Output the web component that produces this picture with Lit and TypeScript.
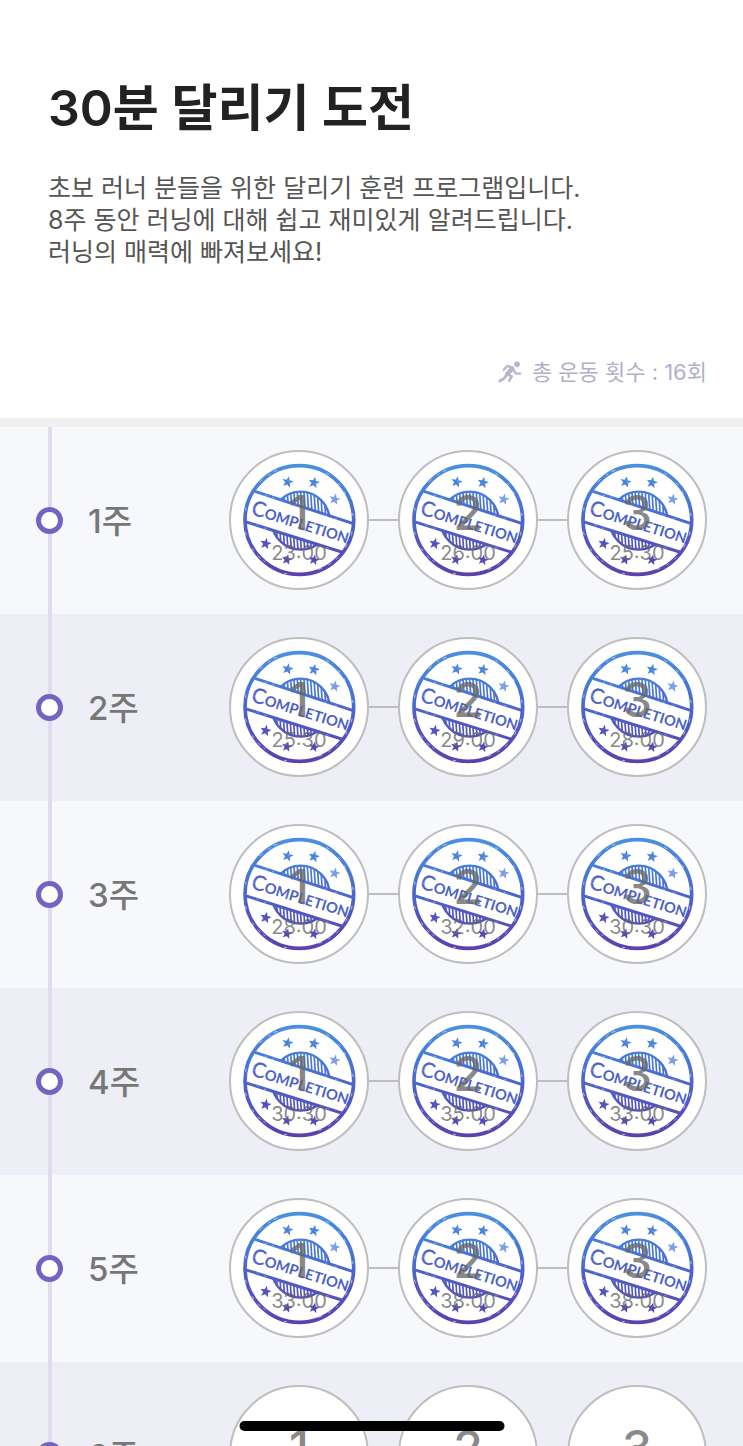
import { LitElement, html, css, svg, nothing } from "lit";
import { customElement, property } from "lit/decorators.js";

interface Week {
  week: number;
  done: boolean;
  times: string[];
}

const WEEKS: Week[] = [
  { week: 1, done: true, times: ["23:00", "26:00", "25:30"] },
  { week: 2, done: true, times: ["25:30", "29:00", "28:00"] },
  { week: 3, done: true, times: ["28:00", "32:00", "30:30"] },
  { week: 4, done: true, times: ["30:30", "35:00", "33:00"] },
  { week: 5, done: true, times: ["33:00", "38:00", "38:00"] },
  { week: 6, done: false, times: ["", "", ""] },
];

/** Five-pointed star around (cx, cy). */
const star = (cx: number, cy: number, r: number, turn: number) => {
  const points = Array.from({ length: 10 }, (_, i) => {
    const radius = i % 2 ? r * 0.42 : r;
    const a = ((i * 36 - 90 + turn) * Math.PI) / 180;
    return `${(cx + radius * Math.cos(a)).toFixed(1)},${(cy + radius * Math.sin(a)).toFixed(1)}`;
  }).join(" ");
  return svg`<polygon points=${points}></polygon>`;
};

@customElement("completion-stamp")
export class CompletionStamp extends LitElement {
  static styles = css`
    :host {
      display: block;
    }
    .art {
      display: block;
      width: 100%;
      height: 100%;
    }
    .word {
      font-family: Lato, "Open Sans", sans-serif;
      font-weight: 700;
      font-size: 44px;
      fill: #4c62c8;
    }
    .initial {
      font-size: 62px;
      font-weight: 400;
      stroke: #4c62c8;
      stroke-width: 1px;
    }
  `;

  render() {
    const hatch = Array.from({ length: 19 }, (_, i) => 142 + i * 10);
    return html`<svg class="art" viewBox="12 16 420 420" aria-hidden="true">
      <defs>
        <linearGradient id="ink" gradientUnits="userSpaceOnUse" x1="0" y1="60" x2="0" y2="395">
          <stop offset="0" stop-color="#4a90e0"></stop>
          <stop offset="0.3" stop-color="#4679d8"></stop>
          <stop offset="0.6" stop-color="#4f5cc6"></stop>
          <stop offset="1" stop-color="#5c40ac"></stop>
        </linearGradient>
        <clipPath id="above"><path d="M60 40H420V248L90 140L60 130z"></path></clipPath>
        <clipPath id="below"><path d="M20 218L58 230L350 322L420 344V420H20z"></path></clipPath>
        <clipPath id="emblem"><circle cx="227" cy="228" r="88"></circle></clipPath>
      </defs>
      <g fill="none" stroke="url(#ink)">
        <circle cx="223" cy="226" r="163" stroke-width="11"></circle>
        <path d="M90 140L385 237M58 230L350 322" stroke-width="9"></path>
        ${["above", "below"].map(
          (side) => svg`<g clip-path=${`url(#${side})`}>
            <circle cx="227" cy="228" r="87" stroke-width="7"></circle>
            <g clip-path="url(#emblem)" stroke-width="5">
              ${hatch.map((x) => svg`<path d=${`M${x - 6} 130L${x + 8} 330`}></path>`)}
            </g>
          </g>`
        )}
      </g>
      <g fill="url(#ink)">
        ${star(188, 112, 18, 12)} ${star(267, 114, 18, 12)} ${star(122, 297, 18, 12)}
        ${star(186, 345, 17, 12)} ${star(267, 346, 17, 12)}
        <g opacity="0.7">${star(329, 164, 18, 12)}</g>
        <text class="word" transform="translate(76 208) rotate(17)"><tspan class="initial">C</tspan>OMPLETION</text>
      </g>
      <g fill="none" stroke="#fff" stroke-linecap="round" opacity="0.55">
        <path
          stroke-width="3"
          d="M104 112l8-7M131 91l4-3M147 80l9-3M305 86l6 4M340 116l5 5M358 141l3 6M62 197l1-7M61 262l3 8M82 312l4 6M99 334l7 6M116 348l4 3M282 374l8-3M311 361l5-4M383 206l1 7M381 262l-2 9M366 300l-4 8M334 344l5-5M178 386l7 1"
        ></path>
        <path stroke-width="2" d="M120 152l5 1M142 158l4 2M330 221l6 2M300 211l4 1M96 240l4 2M118 250l5 1M305 309l5 1M84 180l5 5M92 204l8 6M86 190l2 5M113 205l6 3M338 275l5 4M262 236l5 3M191 109l3 3M270 116l4 2"></path>
      </g>
    </svg>`;
  }
}

@customElement("session-circle")
export class SessionCircle extends LitElement {
  @property({ type: Number }) index = 1;
  @property() time = "";
  @property({ type: Boolean }) done = false;

  static styles = css`
    :host {
      display: block;
      flex: none;
    }
    .circle {
      position: relative;
      display: flex;
      flex-direction: column;
      align-items: center;
      width: 140px;
      height: 140px;
      margin: 0;
      padding: 33px 0 0;
      box-sizing: border-box;
      border: 2px solid #bebebe;
      border-radius: 50%;
      background: #fff;
      color: rgba(104, 104, 104, 0.78);
      font-family: Inter, "Noto Sans CJK KR", sans-serif;
      cursor: pointer;
    }
    .stamp {
      position: absolute;
      inset: -2px;
    }
    .number {
      position: relative;
      font-size: 48px;
      line-height: 56px;
      font-weight: 500;
    }
    .time {
      position: relative;
      font-size: 20px;
      line-height: 24px;
    }
  `;

  render() {
    return html`<button class="circle" type="button">
      ${this.done ? html`<completion-stamp class="stamp"></completion-stamp>` : nothing}
      <span class="number">${this.index}</span>
      <span class="time">${this.time}</span>
    </button>`;
  }
}

@customElement("app-root")
export class AppRoot extends LitElement {
  static styles = css`
    :host {
      display: block;
      height: 100vh;
      overflow-y: auto;
      scrollbar-width: none;
      background: #fff;
      font-family: Inter, "Noto Sans CJK KR", sans-serif;
      color: #222;
    }
    .intro {
      padding: 72px 36px 30px 48px;
      border-bottom: 9px solid #f0f0f0;
    }
    .title {
      margin: 0;
      font-size: 50px;
      line-height: 72px;
      font-weight: 600;
    }
    .lead {
      margin: 28px 0 0;
      font-size: 25px;
      line-height: 32px;
      color: #555;
    }
    .total {
      display: flex;
      justify-content: flex-end;
      align-items: center;
      gap: 10px;
      margin: 88px 0 0;
      font-size: 22px;
      line-height: 32px;
      color: #b3afc8;
    }
    .runner {
      width: 24px;
      height: 22px;
    }
    .weeks {
      margin: 0;
      padding: 0;
      list-style: none;
    }
    .week {
      display: flex;
      align-items: center;
      padding: 0 36px;
      background: #f6f8fc;
    }
    .week:nth-child(even) {
      background: #edeef6;
    }
    .rail {
      display: flex;
      align-self: stretch;
      align-items: center;
      justify-content: center;
      width: 27px;
      background: linear-gradient(#e0dcf0, #e0dcf0) center / 4px 100% no-repeat;
    }
    .dot {
      width: 27px;
      height: 27px;
      box-sizing: border-box;
      border: 5px solid #7463c3;
      border-radius: 50%;
      background: #fff;
    }
    .label {
      flex: 1;
      margin: 0 0 0 25px;
      font-size: 33px;
      line-height: 48px;
      font-weight: 500;
      color: #777;
    }
    .sessions {
      display: flex;
      align-items: center;
      padding: 23px 0 24px;
    }
    .link {
      width: 29px;
      height: 2px;
      background: #bebebe;
    }
    .home {
      position: fixed;
      left: 50%;
      bottom: 15px;
      width: 265px;
      height: 10px;
      border-radius: 5px;
      background: #000;
      transform: translateX(-50%);
    }
  `;

  render() {
    return html`
      <header class="intro">
        <h1 class="title">30분 달리기 도전</h1>
        <p class="lead">
          초보 러너 분들을 위한 달리기 훈련 프로그램입니다.<br />8주 동안 러닝에 대해 쉽고 재미있게
          알려드립니다.<br />러닝의 매력에 빠져보세요!
        </p>
        <p class="total">
          <svg class="runner" viewBox="53 48 72 66" fill="none" stroke="#b9b5cc" stroke-linecap="round" stroke-linejoin="round" aria-hidden="true">
            <circle cx="110" cy="58" r="8.5" fill="#b9b5cc" stroke="none"></circle>
            <path d="M70 75L81 63L97 68" stroke-width="7"></path>
            <path d="M95 71L81 87" stroke-width="14"></path>
            <path d="M98 72L106 85L119 86" stroke-width="7"></path>
            <path d="M83 88L94 94L87 107" stroke-width="8"></path>
            <path d="M78 90L71 101L58 108" stroke-width="8"></path>
          </svg>
          <span>총 운동 횟수 : 16회</span>
        </p>
      </header>
      <ol class="weeks">
        ${WEEKS.map(
          (w) => html`<li class="week">
            <span class="rail"><span class="dot"></span></span>
            <h2 class="label">${w.week}주</h2>
            <div class="sessions">
              ${w.times.map(
                (time, i) => html`${i ? html`<span class="link"></span>` : nothing}<session-circle
                    .index=${i + 1}
                    .time=${time}
                    .done=${w.done}
                  ></session-circle>`
              )}
            </div>
          </li>`
        )}
      </ol>
      <div class="home"></div>
    `;
  }
}
